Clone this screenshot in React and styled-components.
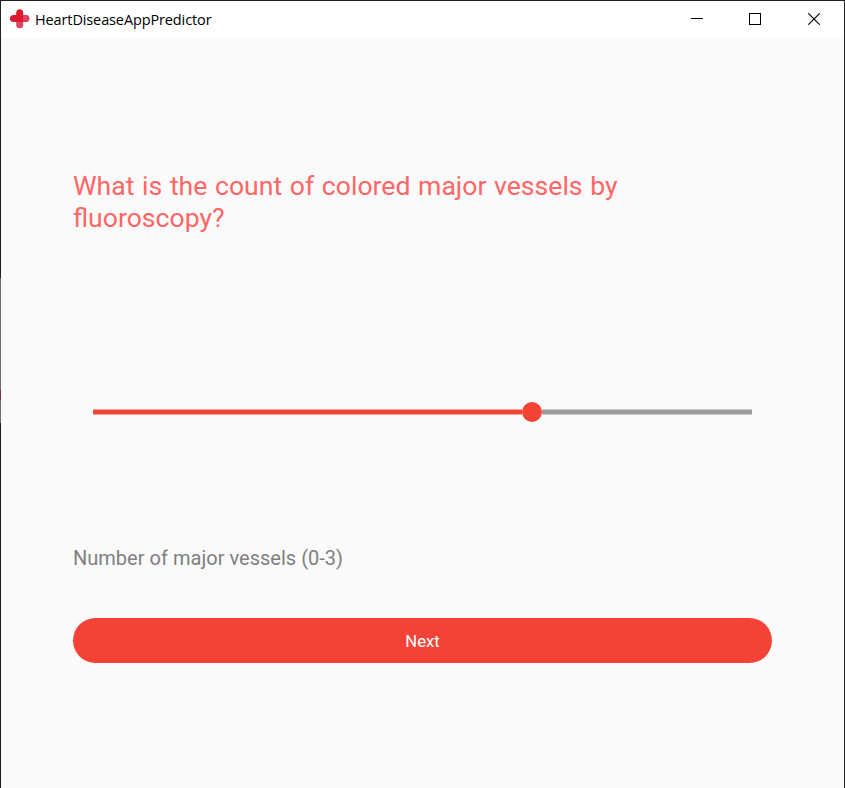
import React from "react";
import styled, { createGlobalStyle } from "styled-components";

const GlobalStyle = createGlobalStyle`
  * { box-sizing: border-box; }
  body { margin: 0; overflow: hidden; background: #fafafa; }
`;

const Window = styled.div`
  display: grid;
  grid-template-columns: 1px 1fr 1px;
  width: 845px;
  height: 788px;
  border-top: 1px solid #1f1e20;
  background: #fafafa;
  font-family: Roboto, sans-serif;
`;

const LeftEdge = styled.div`
  background: linear-gradient(
    #1f1e20 277px, #6e6e6e 277px, #6e6e6e 389px,
    #84332e 389px, #84332e 399px, #6e6e6e 399px,
    #6e6e6e 422px, #1f1e20 422px
  );
`;

const RightEdge = styled.div`
  background: #252427;
`;

const Frame = styled.div`
  display: flex;
  flex-direction: column;
`;

const TitleBar = styled.header`
  display: flex;
  align-items: center;
  height: 37px;
  padding: 0 0 1px 9px;
  background: #fff;
`;

const AppName = styled.span`
  flex: 1;
  margin-left: 5px;
  padding-top: 1px;
  font: 14.5px/20px "Open Sans", "Noto Sans", sans-serif;
  letter-spacing: -0.12px;
  color: #000;
  white-space: nowrap;
`;

const WindowControl = styled.button`
  display: flex;
  align-items: center;
  justify-content: center;
  width: ${({ $width }) => $width}px;
  height: 36px;
  padding: 0;
  border: 0;
  background: transparent;
`;

const Screen = styled.main`
  display: flex;
  flex-direction: column;
  flex: 1;
  padding: 132px 72px 0;
`;

const Question = styled.h1`
  height: 64px;
  margin: 0;
  font-size: 26.6px;
  font-weight: 400;
  line-height: 32px;
  word-spacing: 1.05px;
  color: #ff6666;
`;

const SliderRow = styled.div`
  display: flex;
  align-items: center;
  height: 20px;
  margin: 168px 20px 0;
`;

const Track = styled.div`
  flex: ${({ $flex }) => $flex};
  height: 6px;
  background: ${({ $active }) =>
    $active
      ? "linear-gradient(#f8a09a 1px, #f44336 1px, #f44336 5px, #f8a09a 5px)"
      : "linear-gradient(#cbcbca 1px, #9b9b99 1px, #9b9b99 5px, #cbcbca 5px)"};
`;

const Thumb = styled.div`
  width: 20px;
  height: 20px;
  border-radius: 50%;
  background: #f44336;
`;

const Hint = styled.p`
  height: 24px;
  margin: 124px 0 0;
  font-size: 20px;
  line-height: 24px;
  word-spacing: 0.15px;
  color: #808080;
`;

const NextButton = styled.button`
  height: 45px;
  margin-top: 48px;
  padding: 2px 0 0;
  border: 0;
  border-radius: 23px;
  background: #f44336;
  color: #fff;
  font: 400 16.7px/43px Roboto, sans-serif;
`;

function CrossIcon() {
  return (
    <svg width="20" height="20" viewBox="0 0 20 20" aria-hidden="true">
      <rect x="0" y="6" width="19.3" height="7" rx="3.5" fill="#d91c32" />
      <path d="M10 6h5.8a3.5 3.5 0 0 1 0 7H10z" fill="#df4563" />
      <path d="M6.2 6V3.8a3.5 3.5 0 0 1 7 0V13h-7z" fill="#dc1b2c" />
      <path d="M6.2 13h7v2.7a3.5 3.5 0 0 1-7 0z" fill="#df4563" />
    </svg>
  );
}

export default function App() {
  return (
    <>
      <GlobalStyle />
      <Window>
        <LeftEdge />
        <Frame>
          <TitleBar>
            <CrossIcon />
            <AppName>HeartDiseaseAppPredictor</AppName>
            <WindowControl $width={58} aria-label="Minimize">
              <svg width="12" height="12" shapeRendering="crispEdges"><path d="M0 5.5h12" stroke="#000" /></svg>
            </WindowControl>
            <WindowControl $width={58} aria-label="Maximize">
              <svg width="12" height="12" shapeRendering="crispEdges"><path d="M.5.5h11v11H.5z" fill="none" stroke="#000" /></svg>
            </WindowControl>
            <WindowControl $width={60} aria-label="Close">
              <svg width="12" height="12"><path d="M.3.3l11.4 11.4M11.7.3L.3 11.7" stroke="#000" strokeWidth="1.1" /></svg>
            </WindowControl>
          </TitleBar>
          <Screen>
            <Question>What is the count of colored major vessels by fluoroscopy?</Question>
            <SliderRow>
              <Track $active $flex="0 0 429.4px" />
              <Thumb />
              <Track $flex="1" />
            </SliderRow>
            <Hint>Number of major vessels (0-3)</Hint>
            <NextButton>Next</NextButton>
          </Screen>
        </Frame>
        <RightEdge />
      </Window>
    </>
  );
}
